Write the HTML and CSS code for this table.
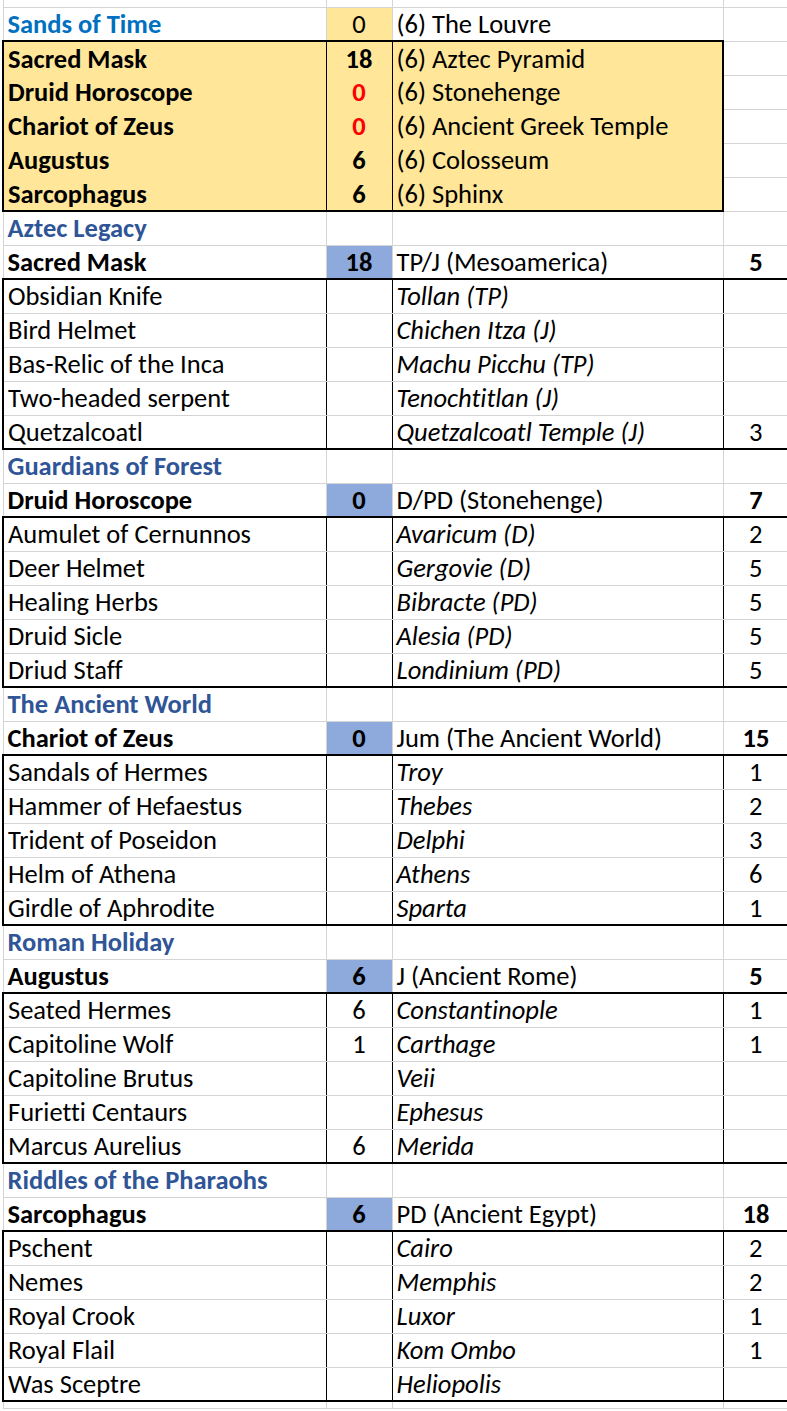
FILE: index.html
```html
<!DOCTYPE html>
<html>
<head>
<meta charset="utf-8">
<link rel="stylesheet" href="styles.css">
</head>
<body>
<table class="sheet">
<colgroup><col class="c1"><col class="c2"><col class="c3"><col class="c4"></colgroup>
<tbody>
<tr class="stub"><td></td><td></td><td></td><td></td></tr>

<tr class="top"><td class="title-lt">Sands of Time</td><td class="num yel-cell">0</td><td>(6) The Louvre</td><td></td></tr>
<tr class="yel"><td class="b">Sacred Mask</td><td class="num b">18</td><td>(6) Aztec Pyramid</td><td></td></tr>
<tr class="yel"><td class="b">Druid Horoscope</td><td class="num b red">0</td><td>(6) Stonehenge</td><td></td></tr>
<tr class="yel"><td class="b">Chariot of Zeus</td><td class="num b red">0</td><td>(6) Ancient Greek Temple</td><td></td></tr>
<tr class="yel"><td class="b">Augustus</td><td class="num b">6</td><td>(6) Colosseum</td><td></td></tr>
<tr class="yel last"><td class="b">Sarcophagus</td><td class="num b">6</td><td>(6) Sphinx</td><td></td></tr>

<tr><td class="title">Aztec Legacy</td><td></td><td></td><td></td></tr>
<tr class="head"><td class="b">Sacred Mask</td><td class="num b blue">18</td><td>TP/J (Mesoamerica)</td><td class="num b">5</td></tr>
<tr class="box"><td>Obsidian Knife</td><td class="num"></td><td class="i">Tollan (TP)</td><td class="num"></td></tr>
<tr class="box"><td>Bird Helmet</td><td class="num"></td><td class="i">Chichen Itza (J)</td><td class="num"></td></tr>
<tr class="box"><td>Bas-Relic of the Inca</td><td class="num"></td><td class="i">Machu Picchu (TP)</td><td class="num"></td></tr>
<tr class="box"><td>Two-headed serpent</td><td class="num"></td><td class="i">Tenochtitlan (J)</td><td class="num"></td></tr>
<tr class="box last"><td>Quetzalcoatl</td><td class="num"></td><td class="i">Quetzalcoatl Temple (J)</td><td class="num">3</td></tr>

<tr><td class="title">Guardians of Forest</td><td></td><td></td><td></td></tr>
<tr class="head"><td class="b">Druid Horoscope</td><td class="num b blue">0</td><td>D/PD (Stonehenge)</td><td class="num b">7</td></tr>
<tr class="box"><td>Aumulet of Cernunnos</td><td class="num"></td><td class="i">Avaricum (D)</td><td class="num">2</td></tr>
<tr class="box"><td>Deer Helmet</td><td class="num"></td><td class="i">Gergovie (D)</td><td class="num">5</td></tr>
<tr class="box"><td>Healing Herbs</td><td class="num"></td><td class="i">Bibracte (PD)</td><td class="num">5</td></tr>
<tr class="box"><td>Druid Sicle</td><td class="num"></td><td class="i">Alesia (PD)</td><td class="num">5</td></tr>
<tr class="box last"><td>Driud Staff</td><td class="num"></td><td class="i">Londinium (PD)</td><td class="num">5</td></tr>

<tr><td class="title">The Ancient World</td><td></td><td></td><td></td></tr>
<tr class="head"><td class="b">Chariot of Zeus</td><td class="num b blue">0</td><td>Jum (The Ancient World)</td><td class="num b">15</td></tr>
<tr class="box"><td>Sandals of Hermes</td><td class="num"></td><td class="i">Troy</td><td class="num">1</td></tr>
<tr class="box"><td>Hammer of Hefaestus</td><td class="num"></td><td class="i">Thebes</td><td class="num">2</td></tr>
<tr class="box"><td>Trident of Poseidon</td><td class="num"></td><td class="i">Delphi</td><td class="num">3</td></tr>
<tr class="box"><td>Helm of Athena</td><td class="num"></td><td class="i">Athens</td><td class="num">6</td></tr>
<tr class="box last"><td>Girdle of Aphrodite</td><td class="num"></td><td class="i">Sparta</td><td class="num">1</td></tr>

<tr><td class="title">Roman Holiday</td><td></td><td></td><td></td></tr>
<tr class="head"><td class="b">Augustus</td><td class="num b blue">6</td><td>J (Ancient Rome)</td><td class="num b">5</td></tr>
<tr class="box"><td>Seated Hermes</td><td class="num">6</td><td class="i">Constantinople</td><td class="num">1</td></tr>
<tr class="box"><td>Capitoline Wolf</td><td class="num">1</td><td class="i">Carthage</td><td class="num">1</td></tr>
<tr class="box"><td>Capitoline Brutus</td><td class="num"></td><td class="i">Veii</td><td class="num"></td></tr>
<tr class="box"><td>Furietti Centaurs</td><td class="num"></td><td class="i">Ephesus</td><td class="num"></td></tr>
<tr class="box last"><td>Marcus Aurelius</td><td class="num">6</td><td class="i">Merida</td><td class="num"></td></tr>

<tr><td class="title">Riddles of the Pharaohs</td><td></td><td></td><td></td></tr>
<tr class="head"><td class="b">Sarcophagus</td><td class="num b blue">6</td><td>PD (Ancient Egypt)</td><td class="num b">18</td></tr>
<tr class="box"><td>Pschent</td><td class="num"></td><td class="i">Cairo</td><td class="num">2</td></tr>
<tr class="box"><td>Nemes</td><td class="num"></td><td class="i">Memphis</td><td class="num">2</td></tr>
<tr class="box"><td>Royal Crook</td><td class="num"></td><td class="i">Luxor</td><td class="num">1</td></tr>
<tr class="box"><td>Royal Flail</td><td class="num"></td><td class="i">Kom Ombo</td><td class="num">1</td></tr>
<tr class="box last"><td>Was Sceptre</td><td class="num"></td><td class="i">Heliopolis</td><td class="num"></td></tr>

<tr class="stub"><td></td><td></td><td></td><td></td></tr>
</tbody>
</table>
</body>
</html>
```
FILE: styles.css
```css
html, body {
  margin: 0;
  padding: 0;
  background: #ffffff;
  overflow: hidden;
}

.sheet {
  border-collapse: collapse;
  table-layout: fixed;
  width: 786px;
  margin-left: 2px;
  font-family: "Carlito", "Lato", sans-serif;
  font-size: 26.5px;
  font-variant-ligatures: none;
  color: #000000;
}

.c1 { width: 323px; }
.c2 { width: 66px; }
.c3 { width: 331px; }
.c4 { width: 66px; }

.sheet td {
  height: 34px;
  padding: 0 4px;
  box-sizing: border-box;
  white-space: nowrap;
  overflow: hidden;
  vertical-align: middle;
  line-height: 30px;
  border-top: none;
  border-left: none;
  border-right: 1px solid #d4d4d4;
  border-bottom: 1px solid #d4d4d4;
}

.sheet td:first-child {
  border-left: 1px solid #d4d4d4;
}

.sheet tr.stub td {
  height: 7px;
  line-height: 0;
  padding: 0;
}

.num { text-align: center; }
.b { font-weight: bold; }
.i { font-style: italic; }
.red { color: #ff0000; }

.title-lt {
  color: #0070c0;
  font-weight: bold;
}

.title {
  color: #2f5597;
  font-weight: bold;
}

.yel-cell { background: #ffe699; }
.blue { background: #8ea9db; }

/* top block */
.sheet tr.top td:nth-child(-n+3) {
  border-bottom: 2px solid #000;
}

.sheet tr.yel td:nth-child(-n+3) {
  background: #ffe699;
  border-bottom: none;
  border-right: 1px solid #000;
}
.sheet tr.yel td:first-child {
  border-left: 2px solid #000;
}
.sheet tr.yel td:nth-child(3) {
  border-right: 2px solid #000;
}
.sheet tr.yel.last td:nth-child(-n+3) {
  border-bottom: 2px solid #000;
}

/* section boxes */
.sheet tr.head td {
  border-bottom: 2px solid #000;
}

.sheet tr.box td {
  border-right: 1px solid #000;
}
.sheet tr.box td:first-child {
  border-left: 2px solid #000;
}
.sheet tr.box td:last-child {
  border-right: 2px solid #000;
}
.sheet tr.box.last td {
  border-bottom: 2px solid #000;
}
```
